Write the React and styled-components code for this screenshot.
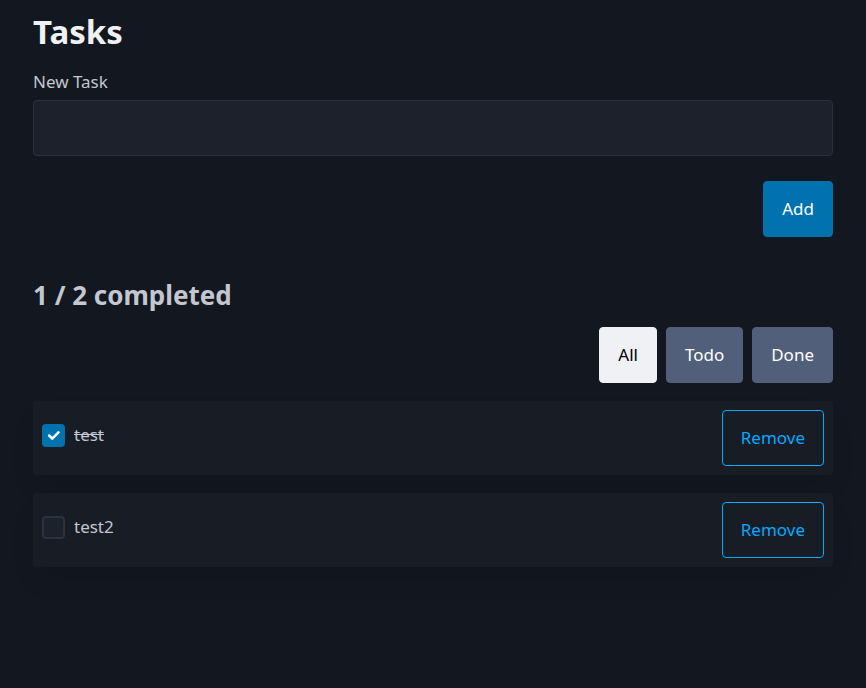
import React, { useState } from "react";
import styled, { createGlobalStyle, css } from "styled-components";

const GlobalStyle = createGlobalStyle`
  *, *::before, *::after { box-sizing: border-box; }
  body {
    margin: 0;
    background: #13171f;
    color: #c2c7d0;
    font: 400 17px/26px "Noto Sans", "Open Sans", sans-serif;
  }
`;

const Page = styled.main`
  padding: 9px 33px 32px;
`;

const Title = styled.h1`
  margin: 0 0 14px;
  color: #f0f1f3;
  font-size: 33px;
  line-height: 46px;
  font-weight: 700;
`;

const Field = styled.label`
  display: block;
`;

const TextInput = styled.input`
  display: block;
  width: 100%;
  height: 56px;
  margin-top: 5px;
  padding: 0 18px;
  border: 1px solid #2a3140;
  border-radius: 4px;
  background: #1c212c;
  color: #e0e3e7;
  font: inherit;
  outline: none;
  &:focus { border-color: #0172ad; }
`;

const Actions = styled.div`
  display: flex;
  justify-content: flex-end;
  gap: 9px;
  margin-top: ${(p) => p.$top}px;
`;

const variants = {
  primary: css`background: #0172ad; border-color: #0172ad; color: #fff;`,
  secondary: css`background: #525f7a; border-color: #525f7a; color: #fff;`,
  contrast: css`background: #eff1f4; border-color: #eff1f4; color: #000;`,
  outline: css`background: transparent; border-color: #01aaff; color: #01aaff;`,
};

const Button = styled.button`
  height: 56px;
  padding: 0 18px;
  border: 1px solid;
  border-radius: 4px;
  font: inherit;
  cursor: pointer;
  ${(p) => variants[p.$variant]}
`;

const Summary = styled.h2`
  margin: 40px 0 0;
  font-size: 26px;
  line-height: 36px;
  font-weight: 700;
`;

const List = styled.ul`
  display: grid;
  gap: 18px;
  margin: 18px 0 0;
  padding: 0;
  list-style: none;
`;

const Item = styled.li`
  display: flex;
  justify-content: space-between;
  padding: 9px;
  border-radius: 4px;
  background: #181c25;
  box-shadow: 0 16px 32px -8px rgba(7, 9, 12, 0.12);
`;

const ItemLabel = styled.label`
  display: flex;
  align-items: center;
  gap: 9px;
  height: 50px;
  text-decoration: ${(p) => (p.$done ? "line-through" : "none")};
`;

const Check = styled.span`
  display: grid;
  width: 23px;
  height: 23px;
  & > * { grid-area: 1 / 1; }
  svg { pointer-events: none; place-self: center; }
`;

const Checkbox = styled.input`
  appearance: none;
  width: 23px;
  height: 23px;
  margin: 0;
  border: 2px solid #2a3140;
  border-radius: 4px;
  background: #1c212c;
  cursor: pointer;
  &:checked { background: #0172ad; border-color: #0172ad; }
`;

const filters = ["All", "Todo", "Done"];

export default function App() {
  const [tasks, setTasks] = useState([
    { id: 1, name: "test", done: true },
    { id: 2, name: "test2", done: false },
  ]);
  const [filter, setFilter] = useState("All");
  const [name, setName] = useState("");

  const add = (e) => {
    e.preventDefault();
    if (!name.trim()) return;
    setTasks([...tasks, { id: Date.now(), name: name.trim(), done: false }]);
    setName("");
  };
  const toggle = (id) =>
    setTasks(tasks.map((t) => (t.id === id ? { ...t, done: !t.done } : t)));
  const shown = tasks.filter((t) => filter === "All" || t.done === (filter === "Done"));

  return (
    <>
      <GlobalStyle />
      <Page>
        <Title>Tasks</Title>
        <form onSubmit={add}>
          <Field>
            New Task
            <TextInput type="text" value={name} onChange={(e) => setName(e.target.value)} />
          </Field>
          <Actions $top={25}>
            <Button type="submit" $variant="primary">Add</Button>
          </Actions>
        </form>
        <Summary>{tasks.filter((t) => t.done).length} / {tasks.length} completed</Summary>
        <Actions $top={14}>
          {filters.map((f) => (
            <Button key={f} type="button" aria-pressed={f === filter}
              $variant={f === filter ? "contrast" : "secondary"} onClick={() => setFilter(f)}>
              {f}
            </Button>
          ))}
        </Actions>
        <List>
          {shown.map((t) => (
            <Item key={t.id}>
              <ItemLabel $done={t.done}>
                <Check>
                  <Checkbox type="checkbox" checked={t.done} onChange={() => toggle(t.id)} />
                  {t.done && (
                    <svg width="15" height="15" viewBox="0 0 24 24" fill="none" stroke="#fff"
                      strokeWidth="4" strokeLinecap="round" strokeLinejoin="round" aria-hidden="true">
                      <polyline points="20 7 10 17 5 12" />
                    </svg>
                  )}
                </Check>
                {t.name}
              </ItemLabel>
              <Button type="button" $variant="outline"
                onClick={() => setTasks(tasks.filter((x) => x.id !== t.id))}>
                Remove
              </Button>
            </Item>
          ))}
        </List>
      </Page>
    </>
  );
}
